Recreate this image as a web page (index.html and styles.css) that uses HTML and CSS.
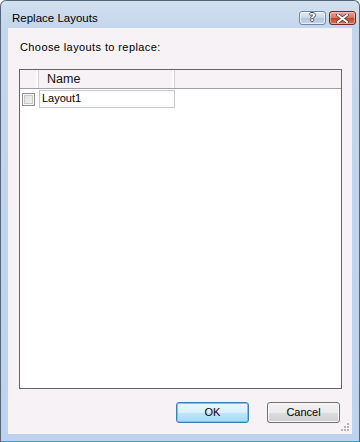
FILE: index.html
```html
<!DOCTYPE html>
<html>
<head>
<meta charset="utf-8">
<link rel="stylesheet" href="styles.css">
</head>
<body>
<div class="window">
  <div class="titlebar">
    <span class="title">Replace Layouts</span>
    <div class="caption-buttons">
      <div class="cap-btn help"><span>?</span></div>
      <div class="cap-btn close">
        <svg width="13" height="9" viewBox="0 0 13 9"><path d="M2 1 L11 8 M11 1 L2 8" stroke="#5a2a22" stroke-width="3.4" stroke-linecap="square"/><path d="M2 1 L11 8 M11 1 L2 8" stroke="#ffffff" stroke-width="2" stroke-linecap="square"/></svg>
      </div>
    </div>
  </div>
  <div class="client">
    <div class="label">Choose layouts to replace:</div>
    <div class="list">
      <div class="header">
        <div class="hcol check-col"></div>
        <div class="hcol name-col">Name</div>
        <div class="hcol fill-col"></div>
      </div>
      <div class="row">
        <div class="cell check-cell"><span class="checkbox"></span></div>
        <div class="cell name-cell">Layout1</div>
      </div>
    </div>
    <div class="buttons">
      <div class="btn default">OK</div>
      <div class="btn">Cancel</div>
    </div>
    <svg class="grip" width="10" height="10" viewBox="0 0 10 10">
      <rect x="7" y="1" width="2" height="2" fill="#b8b4b8"/>
      <rect x="4" y="4" width="2" height="2" fill="#b8b4b8"/>
      <rect x="7" y="4" width="2" height="2" fill="#b8b4b8"/>
      <rect x="1" y="7" width="2" height="2" fill="#b8b4b8"/>
      <rect x="4" y="7" width="2" height="2" fill="#b8b4b8"/>
      <rect x="7" y="7" width="2" height="2" fill="#b8b4b8"/>
    </svg>
  </div>
</div>
</body>
</html>
```
FILE: styles.css
```css
html, body {
  margin: 0;
  padding: 0;
  background: #ffffff;
}
body {
  font-family: "Liberation Sans", Arial, sans-serif;
  font-size: 11px;
  color: #000;
}
.window {
  width: 360px;
  height: 442px;
  box-sizing: border-box;
  border: 1px solid #55667a;
  border-bottom-color: #18b4d4;
  border-radius: 6px 6px 0 0;
  background: linear-gradient(180deg, #d3e0ef 0px, #c3d6ec 27px, #bcd3ef 100%);
  padding: 0 7px 7px 7px;
  display: flex;
  flex-direction: column;
}
.titlebar {
  height: 27px;
  display: flex;
  align-items: flex-start;
  justify-content: space-between;
}
.title {
  font-family: "Liberation Sans", Arial, sans-serif;
  font-size: 11.5px;
  padding: 10px 0 0 4px;
  line-height: 14px;
}
.caption-buttons {
  display: flex;
  gap: 3px;
  padding-top: 10px;
  margin-right: -4px;
}
.cap-btn {
  width: 27px;
  height: 14px;
  box-sizing: border-box;
  border-radius: 3px;
  display: flex;
  align-items: center;
  justify-content: center;
}
.help {
  border: 1px solid #7287a4;
  background: linear-gradient(180deg, #e3ebf5 0%, #c8d6e8 50%, #b2c6de 51%, #c6d6ea 100%);
  box-shadow: inset 0 0 0 1px rgba(255,255,255,0.6);
}
.help span {
  font-family: "DejaVu Sans", sans-serif;
  font-weight: bold;
  font-size: 11px;
  line-height: 12px;
  color: #ffffff;
  text-shadow: 1px 0 0 #44556a, -1px 0 0 #44556a, 0 1px 0 #44556a, 0 -1px 0 #44556a;
}
.close {
  border: 1px solid #6e2a20;
  background: linear-gradient(180deg, #e9a693 0%, #d2735f 50%, #c1432c 51%, #d4775e 100%);
  box-shadow: inset 0 0 0 1px rgba(255,220,210,0.5);
}
.client {
  flex: 1;
  background: #f6f2f6;
  padding: 0 10px 0 11px;
  display: flex;
  flex-direction: column;
  position: relative;
}
.label {
  margin-top: 12px;
  line-height: 14px;
  padding-left: 1px;
  letter-spacing: 0.4px;
}
.list {
  margin-top: 15px;
  height: 320px;
  box-sizing: border-box;
  border: 1px solid #646464;
  background: #ffffff;
}
.header {
  display: flex;
  height: 19px;
  box-sizing: border-box;
  border-bottom: 1px solid #a0a0a0;
  background: #f6f2f6;
}
.hcol {
  box-sizing: border-box;
  border-right: 1px solid #d2d2d2;
  box-shadow: inset -2px 0 0 #ffffff;
}
.check-col { width: 19px; }
.name-col {
  width: 136px;
  font-size: 12.5px;
  font-weight: normal;
  line-height: 18px;
  padding-left: 8px;
  color: #111;
}
.fill-col {
  flex: 1;
  border-right: none;
  box-shadow: none;
}
.row {
  display: flex;
  height: 18px;
  margin-top: 1px;
}
.cell { box-sizing: border-box; }
.check-cell {
  width: 19px;
  padding: 3px 0 0 2px;
}
.checkbox {
  display: block;
  width: 13px;
  height: 13px;
  box-sizing: border-box;
  border: 1px solid #8f8f8f;
  background: linear-gradient(135deg, #dcdcdc 0%, #f4f4f4 100%);
  box-shadow: inset 0 0 0 1px #f8f8f8, inset 0 0 0 2px #c8c8c8;
}
.name-cell {
  width: 136px;
  border: 1px solid #c8c8c8;
  line-height: 15px;
  padding-left: 2px;
}
.buttons {
  display: flex;
  justify-content: flex-end;
  gap: 18px;
  margin-top: 13px;
  padding-right: 2px;
}
.btn {
  width: 73px;
  height: 21px;
  box-sizing: border-box;
  border: 1px solid #707070;
  border-radius: 3px;
  background: linear-gradient(180deg, #f2f2f2 0%, #ebebeb 50%, #dddddd 51%, #cfcfcf 100%);
  box-shadow: inset 0 0 0 1px #fbfbfb;
  text-align: center;
  line-height: 19px;
}
.btn.default {
  border-color: #3c7fb1;
  background: linear-gradient(180deg, #eaf6fd 0%, #d9f0fc 50%, #bee6fd 51%, #a7d9f5 100%);
  box-shadow: inset 0 0 0 1px #48d8fb;
}
.grip {
  position: absolute;
  right: 2px;
  bottom: 2px;
}
```
